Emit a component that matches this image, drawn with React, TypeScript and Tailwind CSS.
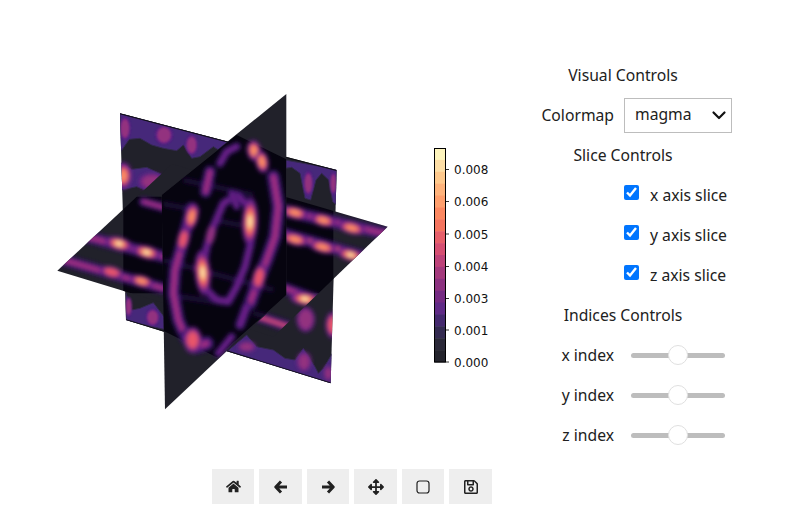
import { FaArrowsAlt, FaHome, FaRegSave } from "react-icons/fa";

const GREY = "#21212a";
const DARK = "#06040f";

const barColors = [
  "#fdf4bd", "#fddea6", "#fec98d", "#feb37c", "#fe9f6d", "#fb8861",
  "#f4745f", "#e65f6a", "#d54f72", "#bd4379", "#a43a7d", "#8c3280",
  "#742a82", "#5f2a86", "#44296e", "#332a50", "#2a2838", "#24242c",
];
const ticks = [
  { y: 29.5, t: "0.008" },
  { y: 61.5, t: "0.006" },
  { y: 94, t: "0.005" },
  { y: 126.5, t: "0.004" },
  { y: 158.5, t: "0.003" },
  { y: 190, t: "0.001" },
  { y: 222, t: "0.000" },
];

// stacked strokes, each level brighter and narrower, blurred together
const Band = ({ d, w = 24, level = 1 }: { d: string; w?: number; level?: number }) => (
  <g fill="none" strokeLinecap="round" strokeLinejoin="round">
    <path d={d} stroke="#2d1460" strokeWidth={w} />
    <path d={d} stroke="#4f1a80" strokeWidth={w * 0.72} />
    <path d={d} stroke="#6f2088" strokeWidth={w * 0.42} />
    {level > 1 && <path d={d} stroke="#a8327d" strokeWidth={w * 0.3} />}
    {level > 2 && <path d={d} stroke="#ea5a68" strokeWidth={w * 0.2} />}
  </g>
);

const Peak = ({ x, y, rx, ry, rot = 0, level = 3 }: { x: number; y: number; rx: number; ry: number; rot?: number; level?: number }) => {
  const t = `rotate(${rot} ${x} ${y})`;
  return (
    <g transform={t}>
      <ellipse cx={x} cy={y} rx={rx} ry={ry} fill="#5f1f86" />
      <ellipse cx={x} cy={y} rx={rx * 0.78} ry={ry * 0.8} fill="#93307f" />
      {level > 0 && <ellipse cx={x} cy={y} rx={rx * 0.6} ry={ry * 0.62} fill="#e8556a" />}
      {level > 1 && <ellipse cx={x} cy={y} rx={rx * 0.42} ry={ry * 0.45} fill="#fb8d62" />}
      {level > 2 && <ellipse cx={x} cy={y} rx={rx * 0.26} ry={ry * 0.28} fill="#fee5a8" />}
    </g>
  );
};

const Contour = ({ d, fill = "#46287a" }: { d: string; fill?: string }) => (
  <path d={d} fill={fill} stroke="#33294f" strokeWidth={3} />
);

const Slices = () => (
  <svg viewBox="0 0 1080 1020" width={360} height={340} className="shrink-0">
    <defs>
      <filter id="soft" x="-20%" y="-20%" width="140%" height="140%">
        <feGaussianBlur stdDeviation="7" />
      </filter>
      <filter id="softer" x="-20%" y="-20%" width="140%" height="140%">
        <feGaussianBlur stdDeviation="3" />
      </filter>
      <clipPath id="backPlane">
        <polygon points="240,100 890,270 872,910 258,720" />
      </clipPath>
      <clipPath id="flatPlane">
        <polygon points="52,572 396,252 1043,440 700,770" />
      </clipPath>
      <clipPath id="frontPlane">
        <polygon points="739,42 365,345 375,988 739,645" />
      </clipPath>
    </defs>

    {/* y slice, behind everything */}
    <polygon points="240,100 890,270 872,910 258,720" fill={GREY} />
    <g clipPath="url(#backPlane)">
      <Contour d="M240,100 L570,186 L560,225 L520,200 L480,230 L455,235 L430,195 L410,212 L370,205 L335,195 L300,175 L268,178 L242,215 Z" />
      <g filter="url(#softer)">
        <Peak x={255} y={145} rx={16} ry={35} level={0} />
        <Peak x={372} y={165} rx={26} ry={28} level={0} />
        <Peak x={455} y={195} rx={18} ry={30} level={0} />
      </g>
      <Contour d="M242,248 L275,268 L320,262 L370,285 L425,285 L400,320 L340,340 L290,320 L245,330 Z" />
      <g filter="url(#soft)">
        <Peak x={250} y={287} rx={26} ry={40} level={2} />
        <Peak x={335} y={305} rx={40} ry={26} level={0} />
      </g>
      <Contour d="M735,240 L890,268 L890,375 L878,365 L866,300 L845,280 L828,300 L812,360 L795,355 L780,280 L755,262 L735,265 Z" />
      <g filter="url(#softer)">
        <Peak x={805} y={310} rx={14} ry={36} level={0} />
        <Peak x={880} y={310} rx={10} ry={34} level={0} />
      </g>
      <Contour d="M258,640 L275,690 L300,685 L340,668 L372,710 L425,760 L258,722 Z" />
      <g filter="url(#softer)">
        <Peak x={338} y={712} rx={20} ry={26} level={0} />
        <Peak x={266} y={680} rx={10} ry={30} level={0} />
      </g>
      <Contour d="M560,815 L620,765 L650,800 L700,810 L735,835 L765,840 L790,805 L825,860 L835,880 L850,865 L880,815 L880,915 L560,820 Z" />
      <g filter="url(#soft)">
        <Peak x={792} y={845} rx={22} ry={30} level={0} />
        <Peak x={620} y={800} rx={28} ry={16} level={0} />
        <Peak x={865} y={880} rx={14} ry={24} level={0} />
      </g>
      <g filter="url(#soft)">
        <Peak x={797} y={718} rx={28} ry={38} level={0} />
        <Peak x={878} y={735} rx={22} ry={40} level={1} />
      </g>
      <path d="M240,100 L890,270" stroke="#0e0e14" strokeWidth={6} fill="none" />
      <path d="M258,720 L872,910" stroke="#0e0e14" strokeWidth={5} fill="none" />
    </g>

    {/* z slice */}
    <polygon points="52,572 396,252 1043,440 700,770" fill={GREY} />
    <g clipPath="url(#flatPlane)">
      <polygon points="250,350 880,350 880,640 250,640" fill={DARK} />
      <g filter="url(#soft)">
        <Band d="M130,468 L370,530" w={36} level={2} />
        <Band d="M70,540 L370,625" w={34} level={2} />
        <Band d="M735,392 L1040,462" w={38} level={2} />
        <Band d="M735,462 L1000,538" w={36} level={3} />
        <Band d="M310,365 L370,382" w={28} level={2} />
        <Band d="M735,625 L830,660" w={34} level={2} />
        <Band d="M655,710 L745,740" w={32} level={3} />
        <Peak x={237} y={491} rx={42} ry={20} rot={14} />
        <Peak x={320} y={517} rx={42} ry={20} rot={14} />
        <Peak x={215} y={576} rx={36} ry={17} rot={14} level={1} />
        <Peak x={305} y={603} rx={36} ry={17} rot={14} level={2} />
        <Peak x={765} y={398} rx={40} ry={18} rot={14} level={2} />
        <Peak x={850} y={421} rx={38} ry={18} rot={14} level={2} />
        <Peak x={935} y={444} rx={42} ry={18} rot={14} level={2} />
        <Peak x={765} y={478} rx={42} ry={18} rot={14} level={2} />
        <Peak x={848} y={501} rx={42} ry={18} rot={14} level={2} />
        <Peak x={932} y={525} rx={42} ry={18} rot={14} />
        <Peak x={795} y={657} rx={46} ry={20} rot={8} />
      </g>
    </g>

    {/* x slice, in front */}
    <polygon points="739,42 365,345 375,988 739,645" fill={GREY} />
    <g clipPath="url(#frontPlane)">
      <polygon points="365,345 590,165 739,238 739,645 530,832 370,752" fill={DARK} />
      <g filter="url(#soft)">
        <path d="M370,372 L480,392 M520,420 L600,435 M370,540 L700,630 M420,650 L520,665 M640,700 L720,720 M430,300 L640,345" stroke="#1f0c38" strokeWidth={14} fill="none" />
        {/* outer ring */}
        <Band d="M590,200 L560,215 L540,250" w={26} />
        <Band d="M510,275 L497,335" w={36} level={2} />
        <Band d="M700,290 L715,380 L705,470 L680,540 L655,600 L630,670" w={40} level={2} />
        <Band d="M620,680 L600,735" w={30} />
        <Band d="M575,770 L535,820" w={24} />
        <Band d="M455,385 L430,480 L405,570 L400,640 L415,720 L430,755" w={38} level={2} />
        <Band d="M440,770 L470,800 L500,790" w={44} level={2} />
        <Peak x={642} y={212} rx={22} ry={32} rot={-10} level={2} />
        <Peak x={666} y={245} rx={20} ry={34} rot={-10} level={2} />
        <Peak x={455} y={410} rx={20} ry={42} rot={12} level={2} />
        <Peak x={430} y={478} rx={18} ry={38} rot={12} level={1} />
        <Peak x={657} y={592} rx={20} ry={42} rot={12} level={1} />
        <Peak x={458} y={780} rx={28} ry={40} level={1} />
        {/* inner ring */}
        <Band d="M590,345 L550,370 L520,440 L500,500 L488,570 L495,625 L530,660 L565,665 L590,620 L615,560 L632,490 L635,430 L622,375 L590,345" w={26} level={1} />
        <Band d="M575,340 L590,380" w={22} />
        <Peak x={488} y={578} rx={24} ry={68} rot={-4} />
        <Peak x={630} y={425} rx={24} ry={72} rot={2} />
        <Peak x={512} y={465} rx={14} ry={34} rot={12} level={0} />
      </g>
    </g>
  </svg>
);

const ColorBar = () => (
  <svg width={70} height={230} viewBox="0 0 70 230" className="shrink-0">
    {barColors.map((c, i) => (
      <rect key={c} x={14.5} y={8 + i * (214 / 18)} width={11} height={214 / 18 + 0.5} fill={c} />
    ))}
    <rect x={14.5} y={8.5} width={11} height={213.5} fill="none" stroke="#000" strokeWidth={1} />
    {ticks.map((k) => (
      <g key={k.t}>
        <line x1={25.5} x2={29} y1={k.y} y2={k.y} stroke="#000" strokeWidth={0.8} />
        <text x={34} y={k.y + 4.5} fontSize={12} fill="#111" fontFamily="'DejaVu Sans', sans-serif">
          {k.t}
        </text>
      </g>
    ))}
  </svg>
);

const ArrowIcon = ({ flip = false }: { flip?: boolean }) => (
  <svg viewBox="0 0 14 14" className={flip ? "w-[14px] h-[14px] rotate-180" : "w-[14px] h-[14px]"}>
    <path d="M7 1.5 L1.8 7 L7 12.5 M2.5 7 H13" fill="none" stroke="#212121" strokeWidth="3" strokeLinejoin="round" />
  </svg>
);

const tools = [
  { icon: <FaHome size={15} />, w: "w-[42px]" },
  { icon: <ArrowIcon />, w: "w-[43px]" },
  { icon: <ArrowIcon flip />, w: "w-[42px]" },
  { icon: <FaArrowsAlt size={16} />, w: "w-[43px]" },
  {
    icon: (
      <svg viewBox="0 0 14 14" className="w-[14px] h-[14px]">
        <rect x="1" y="1" width="12" height="12" rx="2.5" fill="none" stroke="#212121" strokeWidth="1.2" />
      </svg>
    ),
    w: "w-[42px]",
  },
  { icon: <FaRegSave size={16} />, w: "w-[43px]" },
];

const Heading = ({ children }: { children: string }) => (
  <div className="h-10 flex items-center justify-center pr-[20px] text-[#212121]">
    <span className="translate-y-px">{children}</span>
  </div>
);

const CheckRow = ({ label }: { label: string }) => (
  <label className="h-10 flex items-center pl-[94px] text-[#212121]">
    <input type="checkbox" defaultChecked className="w-[15px] h-[15px] m-0 -translate-y-[3px] accent-[#0075ff]" />
    <span className="ml-[11px] translate-y-px">{label}</span>
  </label>
);

const SliderRow = ({ label }: { label: string }) => (
  <div className="h-10 flex items-center text-[#212121]">
    <span className="w-[84px] text-right translate-y-px">{label}</span>
    <div className="relative ml-[17px] w-[94px] h-[5px] rounded-full bg-[#bdbdbd]">
      <div className="absolute left-[37px] -top-[8px] w-5 h-5 rounded-full bg-white border border-[#e0e0e0]" />
    </div>
  </div>
);

export default function App() {
  return (
    <div className="w-[792px] h-[532px] flex bg-white overflow-hidden text-[15.7px] font-['Noto_Sans',sans-serif]">
      <div className="w-[530px] shrink-0">
        <div className="flex pt-[80px] pl-[40px] h-[469px]">
          <Slices />
          <div className="ml-[20px] mt-[60px]">
            <ColorBar />
          </div>
        </div>
        <div className="flex gap-[5px] pl-[212px]">
          {tools.map((t, i) => (
            <button key={i} className={`${t.w} h-[35px] bg-[#eeeeee] flex items-center justify-center text-[#212121]`}>
              {t.icon}
            </button>
          ))}
        </div>
      </div>
      <div className="w-[206px] pt-[55px]">
        <Heading>Visual Controls</Heading>
        <div className="h-10 flex items-center text-[#212121]">
          <span className="w-[84px] text-right translate-y-px">Colormap</span>
          <div className="relative ml-[10px] w-[108px] h-[35px]">
            <select defaultValue="magma" className="w-full h-full appearance-none border border-[#bdbdbd] bg-white pl-[10px] text-[#212121] outline-none">
              <option>magma</option>
              <option>viridis</option>
              <option>plasma</option>
            </select>
            <svg viewBox="0 0 16 16" className="absolute right-[5px] top-[9px] w-4 h-4 pointer-events-none">
              <path d="M2.5 5.5 L8 11 L13.5 5.5" fill="none" stroke="#111" strokeWidth="2.2" strokeLinecap="round" strokeLinejoin="round" />
            </svg>
          </div>
        </div>
        <Heading>Slice Controls</Heading>
        <CheckRow label="x axis slice" />
        <CheckRow label="y axis slice" />
        <CheckRow label="z axis slice" />
        <Heading>Indices Controls</Heading>
        <SliderRow label="x index" />
        <SliderRow label="y index" />
        <SliderRow label="z index" />
      </div>
    </div>
  );
}
